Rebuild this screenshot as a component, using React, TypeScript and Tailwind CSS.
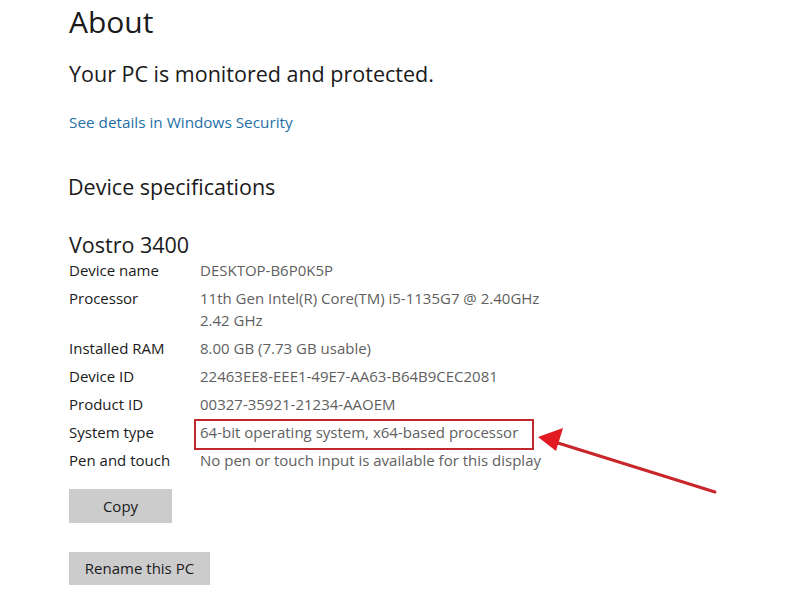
import React from "react";

const rows: { label: string; value: React.ReactNode; highlight?: boolean }[] = [
  { label: "Device name", value: "DESKTOP-B6P0K5P" },
  {
    label: "Processor",
    value: (
      <>
        11th Gen Intel(R) Core(TM) i5-1135G7 @ 2.40GHz
        <br />
        2.42 GHz
      </>
    ),
  },
  { label: "Installed RAM", value: "8.00 GB (7.73 GB usable)" },
  { label: "Device ID", value: "22463EE8-EEE1-49E7-AA63-B64B9CEC2081" },
  { label: "Product ID", value: "00327-35921-21234-AAOEM" },
  { label: "System type", value: "64-bit operating system, x64-based processor", highlight: true },
  { label: "Pen and touch", value: "No pen or touch input is available for this display" },
];

export default function App() {
  return (
    <div
      className="relative w-[800px] h-[600px] overflow-hidden bg-white text-[#1a1a1a]"
      style={{ fontFamily: '"Open Sans", "Noto Sans", sans-serif' }}
    >
      <div className="pl-[69px] pt-[2px] flex flex-col items-start">
        <h1 className="text-[30px] leading-[40px] font-normal">About</h1>
        <p className="mt-[18px] text-[21.5px] leading-[28px]">Your PC is monitored and protected.</p>
        <a className="mt-[24px] text-[15.3px] leading-[20px] text-[#1f6fa6]">See details in Windows Security</a>
        <h2 className="mt-[41px] -ml-[1px] text-[21.5px] leading-[28px]">Device specifications</h2>
        <h3 className="mt-[30px] text-[21.5px] leading-[28px]">Vostro 3400</h3>
        <div className="-mt-[3px] flex flex-col text-[15px] leading-[22px]">
          {rows.map((r) => (
            <div key={r.label} className="flex py-[3px]">
              <div className="w-[131px] shrink-0">{r.label}</div>
              <div className="text-[#5f5f5f]">
                {r.highlight ? (
                  <span className="-ml-[6px] pl-[4px] pr-[14px] pt-[1px] pb-[6px] border-2 border-[#c0282d]">
                    {r.value}
                  </span>
                ) : (
                  r.value
                )}
              </div>
            </div>
          ))}
        </div>
        <button className="mt-[15px] w-[103px] h-[34px] bg-[#cccccc] text-[15px] text-[#1a1a1a]">Copy</button>
        <button className="mt-[29px] w-[141px] h-[33px] bg-[#cccccc] text-[15px] text-[#1a1a1a]">Rename this PC</button>
      </div>
      <svg className="absolute left-0 top-0 pointer-events-none" width="800" height="600">
        <line x1="715" y1="492" x2="558" y2="443" stroke="#c8262b" strokeWidth="3" strokeLinecap="round" />
        <polygon points="538,437 563,428 556,451" fill="#e21b23" />
      </svg>
    </div>
  );
}
